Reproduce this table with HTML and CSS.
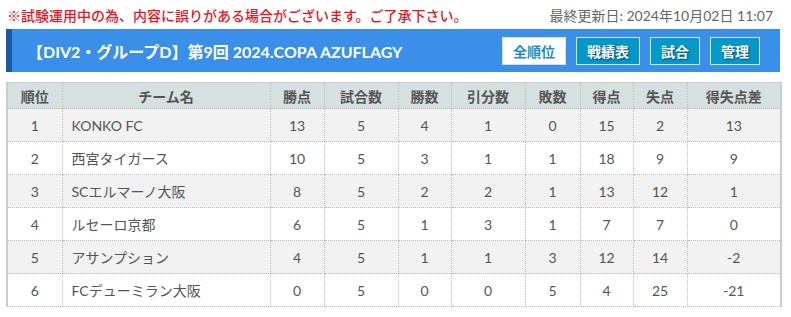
FILE: index.html
```html
<!DOCTYPE html>
<html lang="ja">
<head>
<meta charset="utf-8">
<link rel="stylesheet" href="styles.css">
</head>
<body>
<div class="page">
  <div class="notice-row">
    <span class="notice">※試験運用中の為、内容に誤りがある場合がございます。ご了承下さい。</span>
    <span class="updated">最終更新日: 2024年10月02日 11:07</span>
  </div>
  <div class="title-bar">
    <h1 class="title">【DIV2・グループD】第9回 2024.COPA AZUFLAGY</h1>
    <div class="btns">
      <span class="btn btn-active">全順位</span>
      <span class="btn">戦績表</span>
      <span class="btn">試合</span>
      <span class="btn">管理</span>
    </div>
  </div>
  <table class="standings">
    <colgroup>
      <col style="width:55px"><col style="width:208px"><col style="width:54px"><col style="width:74px"><col style="width:53px"><col style="width:74px"><col style="width:55px"><col style="width:53px"><col style="width:54px"><col style="width:94px">
    </colgroup>
    <thead>
      <tr><th>順位</th><th>チーム名</th><th>勝点</th><th>試合数</th><th>勝数</th><th>引分数</th><th>敗数</th><th>得点</th><th>失点</th><th>得失点差</th></tr>
    </thead>
    <tbody>
      <tr><td>1</td><td class="team">KONKO FC</td><td>13</td><td>5</td><td>4</td><td>1</td><td>0</td><td>15</td><td>2</td><td>13</td></tr>
      <tr><td>2</td><td class="team">西宮タイガース</td><td>10</td><td>5</td><td>3</td><td>1</td><td>1</td><td>18</td><td>9</td><td>9</td></tr>
      <tr><td>3</td><td class="team">SCエルマーノ大阪</td><td>8</td><td>5</td><td>2</td><td>2</td><td>1</td><td>13</td><td>12</td><td>1</td></tr>
      <tr><td>4</td><td class="team">ルセーロ京都</td><td>6</td><td>5</td><td>1</td><td>3</td><td>1</td><td>7</td><td>7</td><td>0</td></tr>
      <tr><td>5</td><td class="team">アサンプション</td><td>4</td><td>5</td><td>1</td><td>1</td><td>3</td><td>12</td><td>14</td><td>-2</td></tr>
      <tr><td>6</td><td class="team">FCデューミラン大阪</td><td>0</td><td>5</td><td>0</td><td>0</td><td>5</td><td>4</td><td>25</td><td>-21</td></tr>
    </tbody>
  </table>
</div>
</body>
</html>
```
FILE: styles.css
```css
* { box-sizing: border-box; }
html, body { margin: 0; padding: 0; background: #fff; }
body {
  font-family: Lato, "Noto Sans CJK JP", sans-serif;
  color: #555;
}
.page {
  width: 791px;
  padding: 4px 11px 0 6px;
}
.notice-row {
  display: flex;
  justify-content: space-between;
  align-items: center;
  height: 21px;
  padding: 0 7px 0 1px;
}
.notice {
  color: #e8141e;
  font-size: 14px;
  font-weight: 500;
  font-family: "Noto Sans CJK JP", sans-serif;
}
.updated {
  color: #666;
  font-size: 14px;
}
.title-bar {
  margin-top: 4px;
  height: 43px;
  background: #3a90e9;
  border-left: 6px solid #1a5ba4;
  display: flex;
  align-items: center;
  justify-content: space-between;
  padding: 0 20px 0 15px;
}
.title {
  margin: 0;
  color: #fff;
  font-size: 16px;
  font-weight: 700;
}
.btns {
  display: flex;
  gap: 10px;
}
.btn {
  display: flex;
  align-items: center;
  justify-content: center;
  height: 28px;
  padding: 0 10px;
  background: #0698c9;
  border: 1px solid #d6e6ee;
  color: #fff;
  font-size: 14px;
  font-weight: 700;
  font-family: "Noto Sans CJK JP", sans-serif;
  text-shadow: 1px 1px 2px rgba(0,0,0,0.55);
}
.btn-active {
  background: #fff;
  color: #1d8fc6;
  text-shadow: none;
  border-color: #ddd;
}
.standings {
  margin-top: 10px;
  width: 774px;
  border-collapse: collapse;
  table-layout: fixed;
  border-top: 1px solid #ccc;
  border-left: 2px solid #ccc;
  border-right: 2px solid #ccc;
  font-size: 14px;
}
.standings th {
  background: #d5e0e0;
  height: 26px;
  font-weight: 700;
  font-size: 14px;
  color: #555;
  border: 1px dotted #bbb;
  border-top: none;
  padding: 0;
  text-align: center;
}
.standings td {
  height: 33px;
  text-align: center;
  border: 1px dotted #bbb;
  padding: 0;
  color: #555;
}
.standings tbody tr:nth-child(odd) td { background: #f2f2f2; }
.standings td.team {
  text-align: left;
  padding-left: 9px;
}
```
